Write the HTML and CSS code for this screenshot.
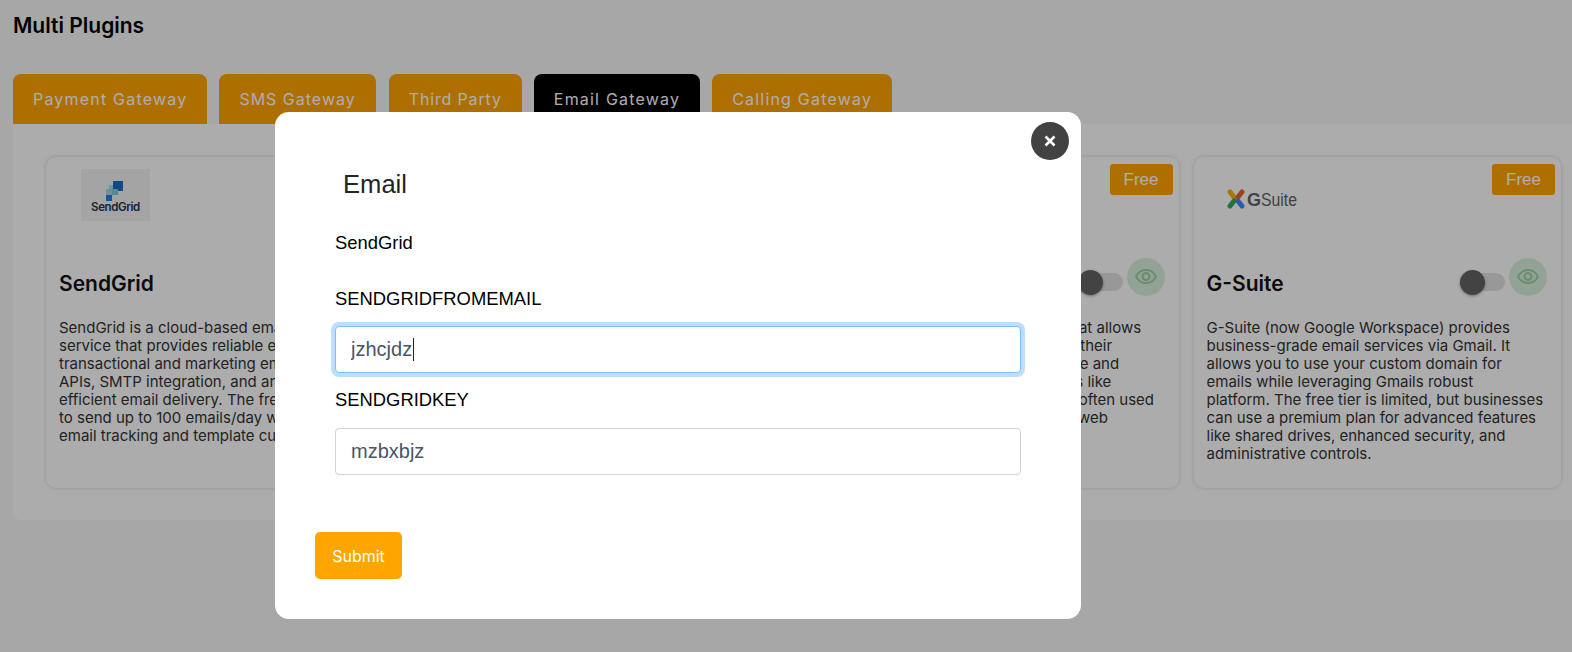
FILE: index.html
```html
<!DOCTYPE html>
<html lang="en">
<head>
<meta charset="utf-8">
<title>Multi Plugins</title>
<link rel="stylesheet" href="styles.css">
</head>
<body>
<main class="page">
  <h1 class="page-title">Multi Plugins</h1>
  <nav class="tabs">
    <a class="tab">Payment Gateway</a>
    <a class="tab tab-sms">SMS Gateway</a>
    <a class="tab tab-third">Third Party</a>
    <a class="tab tab-active">Email Gateway</a>
    <a class="tab">Calling Gateway</a>
  </nav>
  <section class="panel">
    <article class="card">
      <span class="badge">Free</span>
      <div class="logo-area">
        <svg class="logo-sendgrid" width="69" height="52" viewBox="0 0 69 52">
          <rect width="69" height="52" fill="#f2f2f2"/>
          <rect x="28" y="16" width="9" height="9" fill="#99e1f4"/>
          <rect x="32" y="12" width="10" height="10" fill="#1a6fc4"/>
          <rect x="25" y="20" width="6" height="6" fill="#9dd6e8"/>
          <rect x="25" y="26" width="6" height="6" fill="#1a82e2"/>
          <rect x="31" y="20" width="6" height="6" fill="#7fc9e0"/>
          <text x="34.5" y="42" text-anchor="middle" class="logo-sendgrid-text">SendGrid</text>
        </svg>
      </div>
      <div class="card-row">
        <h2 class="card-name">SendGrid</h2>
        <div class="controls">
          <span class="toggle"><span class="thumb"></span></span>
          <span class="eye"><svg width="24" height="24" viewBox="0 0 24 24"><path fill="currentColor" d="M12 6a9.77 9.77 0 0 1 8.82 5.5A9.77 9.77 0 0 1 12 17a9.77 9.77 0 0 1-8.82-5.5A9.77 9.77 0 0 1 12 6m0-2C7 4 2.73 7.11 1 11.5 2.73 15.89 7 19 12 19s9.27-3.11 11-7.5C21.27 7.11 17 4 12 4zm0 5a2.5 2.5 0 0 1 0 5 2.5 2.5 0 0 1 0-5m0-2c-2.48 0-4.5 2.02-4.5 4.5S9.52 16 12 16s4.5-2.02 4.5-4.5S14.48 7 12 7z"/></svg></span>
        </div>
      </div>
      <p class="card-text">SendGrid is a cloud-based email delivery<br>service that provides reliable email for<br>transactional and marketing emails. Its<br>APIs, SMTP integration, and analytics help<br>efficient email delivery. The free tier lets you<br>to send up to 100 emails/day with basic<br>email tracking and template customization.</p>
    </article>
    <article class="card">
      <span class="badge">Free</span>
      <div class="logo-area"></div>
      <div class="card-row">
        <h2 class="card-name">Mailgun</h2>
        <div class="controls">
          <span class="toggle"><span class="thumb"></span></span>
          <span class="eye"><svg width="24" height="24" viewBox="0 0 24 24"><path fill="currentColor" d="M12 6a9.77 9.77 0 0 1 8.82 5.5A9.77 9.77 0 0 1 12 17a9.77 9.77 0 0 1-8.82-5.5A9.77 9.77 0 0 1 12 6m0-2C7 4 2.73 7.11 1 11.5 2.73 15.89 7 19 12 19s9.27-3.11 11-7.5C21.27 7.11 17 4 12 4zm0 5a2.5 2.5 0 0 1 0 5 2.5 2.5 0 0 1 0-5m0-2c-2.48 0-4.5 2.02-4.5 4.5S9.52 16 12 16s4.5-2.02 4.5-4.5S14.48 7 12 7z"/></svg></span>
        </div>
      </div>
      <p class="card-text">Mailgun is an email delivery service built for developers, with APIs and SMTP relays for sending and tracking email.</p>
    </article>
    <article class="card">
      <span class="badge">Free</span>
      <div class="logo-area"></div>
      <div class="card-row">
        <h2 class="card-name">Gmail</h2>
        <div class="controls">
          <span class="toggle"><span class="thumb"></span></span>
          <span class="eye"><svg width="24" height="24" viewBox="0 0 24 24"><path fill="currentColor" d="M12 6a9.77 9.77 0 0 1 8.82 5.5A9.77 9.77 0 0 1 12 17a9.77 9.77 0 0 1-8.82-5.5A9.77 9.77 0 0 1 12 6m0-2C7 4 2.73 7.11 1 11.5 2.73 15.89 7 19 12 19s9.27-3.11 11-7.5C21.27 7.11 17 4 12 4zm0 5a2.5 2.5 0 0 1 0 5 2.5 2.5 0 0 1 0-5m0-2c-2.48 0-4.5 2.02-4.5 4.5S9.52 16 12 16s4.5-2.02 4.5-4.5S14.48 7 12 7z"/></svg></span>
        </div>
      </div>
      <p class="card-text">Gmail SMTP is a free mail service that allows<br>users can send emails directly from their<br>applications through Google's secure and<br>reliable servers. It supports methods like<br>OAuth and app passwords, and it is often used<br>for small businesses and for simple web</p>
    </article>
    <article class="card">
      <span class="badge">Free</span>
      <div class="logo-area logo-area-gsuite">
        <svg class="logo-gsuite" width="76" height="24" viewBox="0 0 76 24">
          <path d="M3 3 L7 8" stroke="#f4b400" stroke-width="5" stroke-linecap="round"/>
          <path d="M15 3 L11 8" stroke="#e8632a" stroke-width="5" stroke-linecap="round"/>
          <path d="M3 17 L7 12" stroke="#34a853" stroke-width="5" stroke-linecap="round"/>
          <path d="M15 17 L11 12" stroke="#4285f4" stroke-width="5" stroke-linecap="round"/>
          <text x="20" y="16.5" class="logo-gsuite-g">G</text>
          <text x="34" y="16.5" textLength="36" lengthAdjust="spacingAndGlyphs" class="logo-gsuite-text">Suite</text>
        </svg>
      </div>
      <div class="card-row">
        <h2 class="card-name">G-Suite</h2>
        <div class="controls">
          <span class="toggle"><span class="thumb"></span></span>
          <span class="eye"><svg width="24" height="24" viewBox="0 0 24 24"><path fill="currentColor" d="M12 6a9.77 9.77 0 0 1 8.82 5.5A9.77 9.77 0 0 1 12 17a9.77 9.77 0 0 1-8.82-5.5A9.77 9.77 0 0 1 12 6m0-2C7 4 2.73 7.11 1 11.5 2.73 15.89 7 19 12 19s9.27-3.11 11-7.5C21.27 7.11 17 4 12 4zm0 5a2.5 2.5 0 0 1 0 5 2.5 2.5 0 0 1 0-5m0-2c-2.48 0-4.5 2.02-4.5 4.5S9.52 16 12 16s4.5-2.02 4.5-4.5S14.48 7 12 7z"/></svg></span>
        </div>
      </div>
      <p class="card-text">G-Suite (now Google Workspace) provides<br>business-grade email services via Gmail. It<br>allows you to use your custom domain for<br>emails while leveraging Gmails robust<br>platform. The free tier is limited, but businesses<br>can use a premium plan for advanced features<br>like shared drives, enhanced security, and<br>administrative controls.</p>
    </article>
  </section>
</main>

<div class="backdrop">
  <div class="dialog">
    <button class="close" type="button" aria-label="Close"><svg width="12" height="12" viewBox="0 0 12 12"><path d="M1.5 1.5 L10.5 10.5 M10.5 1.5 L1.5 10.5" stroke="#fff" stroke-width="2.6"/></svg></button>
    <h3 class="dialog-title">Email</h3>
    <form class="form">
      <p class="provider">SendGrid</p>
      <label class="field-label">SENDGRIDFROMEMAIL</label>
      <div class="input-wrap">
        <input class="input input-focused" type="text" value="jzhcjdz">
        <span class="caret"></span>
      </div>
      <label class="field-label field-label-second">SENDGRIDKEY</label>
      <div class="input-wrap">
        <input class="input" type="text" value="mzbxbjz">
      </div>
      <button class="submit" type="button">Submit</button>
    </form>
  </div>
</div>
</body>
</html>
```

FILE: styles.css
```css
* { box-sizing: border-box; }

html, body {
  margin: 0;
  height: 100%;
  overflow: hidden;
}

body {
  background: #f7f7f7;
  font-family: Inter, "Liberation Sans", sans-serif;
}

.page {
  padding: 0 0 0 13px;
}

.page-title {
  margin: 0;
  padding-top: 12px;
  height: 74px;
  font-size: 21px;
  line-height: 27px;
  font-weight: 600;
  color: #000;
}

.tabs {
  display: flex;
  gap: 12px;
}

.tab {
  height: 50px;
  padding: 13px 20px 0;
  border-radius: 8px 8px 0 0;
  background: #ffa500;
  color: #fff;
  font-size: 16px;
  line-height: 24px;
  letter-spacing: 1.2px;
}

.tab-sms {
  letter-spacing: 1px;
}

.tab-third {
  margin-left: 1px;
  letter-spacing: 0.85px;
}

.tab-active {
  background: #000;
}

.panel {
  display: grid;
  grid-template-columns: repeat(4, 367.5px);
  gap: 15px;
  padding: 33px 0 32px 33px;
  background: #fefefe;
  border-radius: 0 0 0 8px;
}

.card {
  position: relative;
  height: 331px;
  padding: 12px 13px;
  background: #fefefe;
  border-radius: 10px;
  box-shadow: 0 0 4px rgba(0, 0, 0, 0.16);
}

.badge {
  position: absolute;
  top: 7px;
  right: 6px;
  width: 63px;
  height: 31px;
  border-radius: 3px;
  background: #ffa500;
  color: #fff;
  font-family: "Liberation Sans", sans-serif;
  font-size: 17px;
  line-height: 31px;
  text-align: center;
}

.logo-area {
  height: 89px;
  padding-left: 22px;
}

.logo-area-gsuite {
  padding-top: 20px;
  padding-left: 20px;
}

.logo-sendgrid { display: block; }
.logo-sendgrid-text {
  font-family: Inter, sans-serif;
  font-size: 11.5px;
  font-weight: 600;
  letter-spacing: -0.4px;
  fill: #263746;
}

.logo-gsuite { display: block; }
.logo-gsuite-g {
  font-family: "Liberation Sans", sans-serif;
  font-size: 18px;
  font-weight: 700;
  fill: #5f6368;
}
.logo-gsuite-text {
  font-family: "Liberation Sans", sans-serif;
  font-size: 18px;
  fill: #5f6368;
}

.card-row {
  display: flex;
  justify-content: space-between;
  align-items: flex-start;
  height: 38px;
}

.card-name {
  margin: 12px 0 0;
  font-size: 21px;
  line-height: 27px;
  font-weight: 600;
  color: #111;
}

.controls {
  display: flex;
  align-items: flex-start;
  gap: 4px;
  margin-right: 1px;
}

.toggle {
  position: relative;
  display: block;
  width: 45px;
  height: 18px;
  margin-top: 15px;
  border-radius: 9px;
  background: #e0e0e0;
}

.thumb {
  position: absolute;
  left: 0;
  top: -3px;
  width: 25px;
  height: 25px;
  border-radius: 50%;
  background: #646464;
  box-shadow: 0 1px 3px rgba(0, 0, 0, 0.35);
}

.eye {
  display: flex;
  align-items: center;
  justify-content: center;
  width: 38px;
  height: 38px;
  border-radius: 50%;
  background: #d8f0dc;
  color: #9ccfa4;
}

.card-text {
  margin: 23px 0 0;
  font-size: 15px;
  line-height: 18px;
  color: #333;
}

.backdrop {
  position: fixed;
  inset: 0;
  padding: 112px 0 0 275px;
  background: rgba(0, 0, 0, 0.32);
}

.dialog {
  position: relative;
  width: 806px;
  height: 507px;
  padding: 55px 40px 0;
  background: #fff;
  border-radius: 14px;
  font-family: "Liberation Sans", sans-serif;
}

.close {
  position: absolute;
  top: 10px;
  right: 12px;
  display: flex;
  align-items: center;
  justify-content: center;
  width: 38px;
  height: 38px;
  padding: 0;
  border: 0;
  border-radius: 50%;
  background: #424242;
}

.dialog-title {
  margin: 0 0 0 28px;
  font-size: 25.6px;
  line-height: 34px;
  font-weight: 400;
  color: #212529;
}

.form {
  display: flex;
  flex-direction: column;
  align-items: flex-start;
  padding-top: 32px;
}

.provider {
  margin: 0 0 0 20px;
  font-size: 18.4px;
  line-height: 20px;
  color: #000;
}

.field-label {
  margin: 37px 0 0 20px;
  font-size: 18.4px;
  line-height: 18px;
  color: #000;
}

.field-label-second {
  margin-top: 17px;
  line-height: 20px;
}

.input-wrap {
  position: relative;
  width: 686px;
  margin: 18px 0 0 20px;
}

.input {
  display: block;
  width: 100%;
  height: 47px;
  padding: 0 15px;
  border: 1px solid #ced4da;
  border-radius: 4px;
  outline: 0;
  background: #fff;
  font-family: "Liberation Sans", sans-serif;
  font-size: 20px;
  color: #4a5568;
}

.input-focused {
  border-color: #80bdff;
  box-shadow: 0 0 0 4px rgba(0, 123, 255, 0.25);
}

.caret {
  position: absolute;
  left: 78px;
  top: 12px;
  width: 1px;
  height: 23px;
  background: #222;
}

.submit {
  margin-top: 57px;
  width: 87px;
  height: 47px;
  padding: 0;
  border: 0;
  border-radius: 5px;
  background: #ffa500;
  color: #fff;
  font-family: Inter, "Liberation Sans", sans-serif;
  font-size: 16px;
}
```
